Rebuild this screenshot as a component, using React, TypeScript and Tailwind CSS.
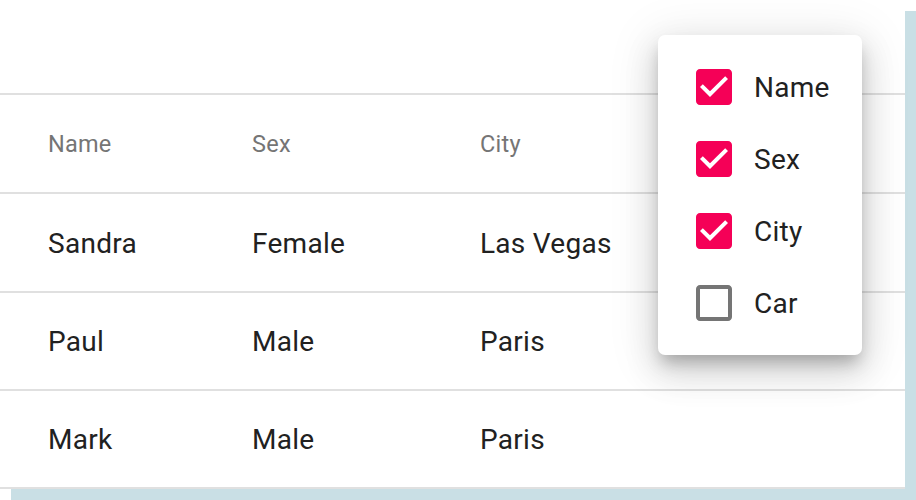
import React from "react";

const rows = [
  { name: "Sandra", sex: "Female", city: "Las Vegas" },
  { name: "Paul", sex: "Male", city: "Paris" },
  { name: "Mark", sex: "Male", city: "Paris" },
];

const items = [
  { label: "Name", checked: true },
  { label: "Sex", checked: true },
  { label: "City", checked: true },
  { label: "Car", checked: false },
];

function CheckIcon({ checked }: { checked: boolean }) {
  return (
    <svg width="48" height="48" viewBox="0 0 24 24" className="shrink-0">
      {checked ? (
        <path
          fill="#f50057"
          d="M19 3H5c-1.11 0-2 .9-2 2v14c0 1.1.89 2 2 2h14c1.11 0 2-.9 2-2V5c0-1.1-.89-2-2-2zm-9 14l-5-5 1.41-1.41L10 14.17l7.59-7.59L19 8l-9 9z"
        />
      ) : (
        <path
          fill="#757575"
          d="M19 5v14H5V5h14m0-2H5c-1.1 0-2 .9-2 2v14c0 1.1.9 2 2 2h14c1.1 0 2-.9 2-2V5c0-1.1-.9-2-2-2z"
        />
      )}
    </svg>
  );
}

export default function App() {
  return (
    <div
      className="relative w-[916px] h-[500px] overflow-hidden bg-white"
      style={{ fontFamily: "Roboto, 'Noto Sans', sans-serif" }}
    >
      <div className="w-[905px] h-[489px] bg-white shadow-[11px_11px_0_0_#c9dfe5] flex flex-col">
        <div className="h-[93px] shrink-0" />
        <div className="grid grid-cols-[252px_228px_1fr] h-[101px] shrink-0 pt-[3px] border-y-2 border-[#e0e0e0] items-center text-[#757575] text-[23.5px] tracking-[0.01em]">
          <div className="pl-[48px]">Name</div>
          <div>Sex</div>
          <div>City</div>
        </div>
        {rows.map((r, i) => (
          <div
            key={i}
            className={`grid grid-cols-[252px_228px_1fr] ${i === 0 ? "h-[99px]" : "h-[98px]"} shrink-0 pt-[2px] border-b-2 border-[#e0e0e0] items-center text-[#212121] text-[28px] tracking-[0.01em]`}
          >
            <div className="pl-[48px]">{r.name}</div>
            <div>{r.sex}</div>
            <div>{r.city}</div>
          </div>
        ))}
      </div>

      <div className="absolute left-[658px] top-[35px] w-[204px] h-[320px] bg-white rounded-[7px] py-[16px] shadow-[0_10px_16px_-4px_rgba(0,0,0,0.25),0_16px_32px_4px_rgba(0,0,0,0.12),0_6px_48px_8px_rgba(0,0,0,0.08)]">
        {items.map((it) => (
          <div key={it.label} className="h-[72px] flex items-center pl-[32px]">
            <CheckIcon checked={it.checked} />
            <span className="ml-[16px] pt-[2px] text-[28px] text-[#212121] tracking-[0.01em]">{it.label}</span>
          </div>
        ))}
      </div>
    </div>
  );
}
